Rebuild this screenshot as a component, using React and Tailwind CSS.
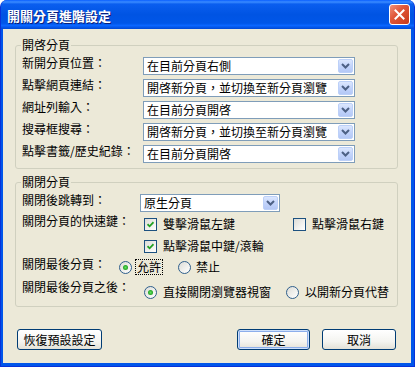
import React from "react";

const Chevron = () => (
  <svg width="9" height="6" viewBox="0 0 9 6">
    <path d="M1 1 L4.5 4.5 L8 1" stroke="#4D6185" strokeWidth="2" fill="none" />
  </svg>
);

function Select({ className, value }) {
  return (
    <div className={"flex h-[18px] border border-[#7F9DB9] bg-white " + className}>
      <div className="flex-1 pl-[3px] leading-[16px] text-[12px] whitespace-nowrap overflow-hidden">{value}</div>
      <div className="w-[15px] my-[1px] mr-[1px] rounded-[2px] border border-[#BCD0F8] bg-[linear-gradient(180deg,#DCE7FE_0%,#C3D4FB_50%,#B4C8F6_100%)] flex items-center justify-center">
        <Chevron />
      </div>
    </div>
  );
}

function Checkbox({ checked }) {
  return (
    <div className="w-[13px] h-[13px] shrink-0 border border-[#1C5180] bg-[linear-gradient(135deg,#DCDCD7_0%,#F2F2EF_60%,#FFFFFF_100%)] flex items-center justify-center">
      {checked && (
        <svg width="7" height="7" viewBox="0 0 7 7">
          <path d="M0.5 3.2 L2.6 5.3 L6.5 1.2" stroke="#21A121" strokeWidth="1.8" fill="none" />
        </svg>
      )}
    </div>
  );
}

function Radio({ checked }) {
  return (
    <div className="w-[13px] h-[13px] shrink-0 rounded-full border border-[#2F5F8C] bg-[linear-gradient(135deg,#DCDCD7_0%,#F2F2EF_60%,#FFFFFF_100%)] flex items-center justify-center">
      {checked && <div className="w-[5px] h-[5px] rounded-full bg-[radial-gradient(circle,#5FE05F_0%,#21A121_70%)]" />}
    </div>
  );
}

function Button({ className, children, def }) {
  return (
    <div
      className={
        "h-[21px] rounded-[3px] border border-[#003C74] bg-[linear-gradient(180deg,#FFFFFF_0%,#F4F4F0_60%,#E3E1D7_100%)] flex items-center justify-center text-[12px] leading-[14px] " +
        (def ? "shadow-[inset_0_0_0_1px_#CEE0FB,inset_0_0_0_2px_#8CAEEB] " : "") +
        className
      }
    >
      {children}
    </div>
  );
}

const Lbl = ({ className, children }) => (
  <div className={"leading-[14px] text-[12px] whitespace-nowrap shrink-0 " + className}>{children}</div>
);

export default function App() {
  return (
    <div className="w-[415px] h-[367px] bg-white font-['Noto_Sans_CJK_TC','Noto_Sans',sans-serif] text-black">
      <div className="w-[415px] h-[367px] flex flex-col rounded-t-[7px] overflow-hidden bg-[#0055EA] border-l border-r border-b border-[#0831D9]">
        {/* Title bar */}
        <div className="h-[29px] shrink-0 -mx-[1px] flex items-center pl-[7px] pr-[5px] bg-[linear-gradient(180deg,#0A5FFF_0%,#3A8BFF_7%,#0A5EEF_14%,#0054E3_50%,#0056E8_80%,#0A66FF_88%,#0048D4_100%)]">
          <div className="flex-1 text-white font-bold text-[13px] leading-[15px] tracking-[0px] [text-shadow:1px_1px_0_#0A1E7A] pt-[1px]">
            開關分頁進階設定
          </div>
          <div className="w-[21px] h-[21px] rounded-[3px] border border-white bg-[linear-gradient(135deg,#F0917A_0%,#E0583A_40%,#C8391B_100%)] flex items-center justify-center">
            <svg width="11" height="11" viewBox="0 0 11 11">
              <path d="M1.5 1.5 L9.5 9.5 M9.5 1.5 L1.5 9.5" stroke="#FFFFFF" strokeWidth="2" strokeLinecap="square" />
            </svg>
          </div>
        </div>

        {/* Body */}
        <div className="flex-1 ml-[2px] mr-[3px] mb-[3px] bg-[#ECE9D8] flex flex-col">
          {/* Group 1 */}
          <fieldset className="mt-[9px] ml-[12px] mr-[13px] border border-[#D0D0BF] rounded-[3px] px-[6px] pt-[5px] pb-[5px]">
            <legend className="text-[12px] leading-[14px] -ml-[1px] px-[1px]">開啓分頁</legend>
            <div className="flex flex-col gap-[4px]">
              <div className="flex items-start">
                <Lbl className="w-[121px] -mt-[1px]">新開分頁位置：</Lbl>
                <Select className="w-[212px]" value="在目前分頁右側" />
              </div>
              <div className="flex items-start">
                <Lbl className="w-[121px] -mt-[1px]">點擊網頁連結：</Lbl>
                <Select className="w-[212px]" value="開啓新分頁，並切換至新分頁瀏覽" />
              </div>
              <div className="flex items-start">
                <Lbl className="w-[121px] -mt-[1px]">網址列輸入：</Lbl>
                <Select className="w-[212px]" value="在目前分頁開啓" />
              </div>
              <div className="flex items-start">
                <Lbl className="w-[121px] -mt-[1px]">搜尋框搜尋：</Lbl>
                <Select className="w-[212px]" value="開啓新分頁，並切換至新分頁瀏覽" />
              </div>
              <div className="flex items-start">
                <Lbl className="w-[121px] -mt-[1px]">點擊書籤/歷史紀錄：</Lbl>
                <Select className="w-[212px]" value="在目前分頁開啓" />
              </div>
            </div>
          </fieldset>

          {/* Group 2 */}
          <fieldset className="mt-[6px] ml-[12px] mr-[13px] border border-[#D0D0BF] rounded-[3px] px-[6px] pt-[5px] pb-[7px]">
            <legend className="text-[12px] leading-[14px] -ml-[1px] px-[1px]">關閉分頁</legend>
            <div className="flex flex-col">
              <div className="flex items-start h-[20px]">
                <Lbl className="w-[118px] -mt-[1px]">關閉後跳轉到：</Lbl>
                <Select className="w-[140px]" value="原生分頁" />
              </div>
              <div className="flex items-start h-[43px]">
                <Lbl className="w-[122px]">關閉分頁的快速鍵：</Lbl>
                <div className="flex flex-col pt-[3px] gap-[8px]">
                  <div className="flex items-center h-[14px]">
                    <div className="flex items-center w-[149px]">
                      <Checkbox checked />
                      <Lbl className="ml-[6px]">雙擊滑鼠左鍵</Lbl>
                    </div>
                    <div className="flex items-center">
                      <Checkbox />
                      <Lbl className="ml-[6px]">點擊滑鼠右鍵</Lbl>
                    </div>
                  </div>
                  <div className="flex items-center h-[14px]">
                    <Checkbox checked />
                    <Lbl className="ml-[6px]">點擊滑鼠中鍵/滾輪</Lbl>
                  </div>
                </div>
              </div>
              <div className="flex items-start h-[23px]">
                <Lbl className="w-[97px]">關閉最後分頁：</Lbl>
                <div className="flex items-center pt-[2px]">
                  <div className="flex items-center w-[59px]">
                    <Radio checked />
                    <div className="ml-[3px] border border-dotted border-[#000] px-[1px] text-[12px] leading-[14px]">允許</div>
                  </div>
                  <div className="flex items-center">
                    <Radio />
                    <div className="ml-[3px] border border-transparent px-[1px] text-[12px] leading-[14px]">禁止</div>
                  </div>
                </div>
              </div>
              <div className="flex items-start h-[19px]">
                <Lbl className="w-[122px]">關閉最後分頁之後：</Lbl>
                <div className="flex items-center pt-[5px]">
                  <div className="flex items-center w-[142px]">
                    <Radio checked />
                    <Lbl className="ml-[6px]">直接關閉瀏覽器視窗</Lbl>
                  </div>
                  <div className="flex items-center">
                    <Radio />
                    <Lbl className="ml-[6px]">以開新分頁代替</Lbl>
                  </div>
                </div>
              </div>
            </div>
          </fieldset>

          {/* Buttons */}
          <div className="flex items-center mt-[22px] ml-[14px] mr-[15px]">
            <Button className="w-[85px]">恢復預設設定</Button>
            <div className="ml-auto flex gap-[12px]">
              <Button className="w-[73px]" def>確定</Button>
              <Button className="w-[74px]">取消</Button>
            </div>
          </div>
        </div>
      </div>
    </div>
  );
}
